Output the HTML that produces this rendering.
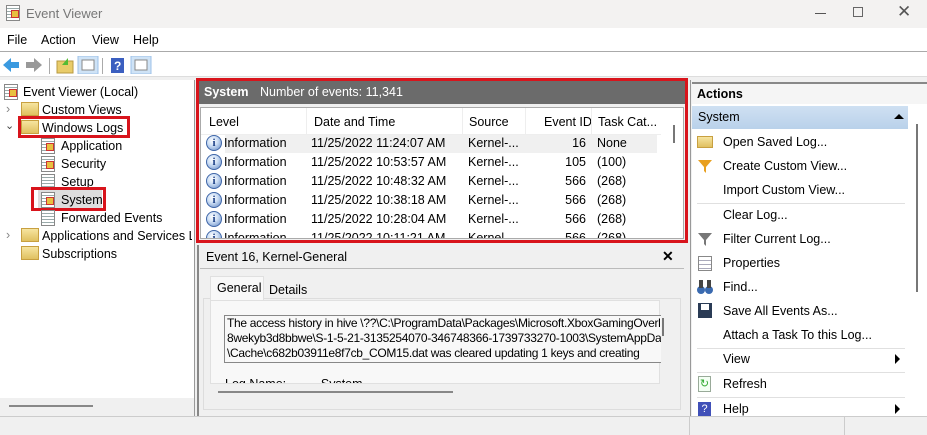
<!DOCTYPE html>
<html><head><meta charset="utf-8"><style>
*{margin:0;padding:0;box-sizing:border-box}
body{width:927px;height:435px;overflow:hidden;background:#f0f0f0;font-family:"Liberation Sans",sans-serif;font-size:12.5px;color:#000;position:relative}
.a{position:absolute;white-space:nowrap}
.info{position:absolute;width:16px;height:16px;border-radius:50%;background:radial-gradient(circle at 40% 35%,#fff,#cfe0f5 40%,#5f86c4);border:1px solid #3f66a8;color:#1b3f86;font:bold 11px "Liberation Serif",serif;text-align:center;line-height:14px}
.log{position:absolute;width:14px;height:16px;background:repeating-linear-gradient(#fff 0 2px,#9aa 2px 3px);border:1px solid #888}
.log.s:after{content:"";position:absolute;left:4px;top:4px;width:6px;height:6px;background:#e8c040;border:1px solid #c33}
.fold{position:absolute;width:18px;height:14px;background:linear-gradient(#f6e4a0,#e0c060);border:1px solid #c8a040}
.sep{position:absolute;height:1px;background:#e0e0e0}
</style></head><body>
<div class="a" style="left:0;top:0;width:927px;height:28px;background:#f3f2f1"></div>
<div class="log s" style="left:6px;top:5px"></div>
<div class="a" style="left:26px;top:6px;color:#777;font-size:13px">Event Viewer</div>
<div class="a" style="left:815px;top:13px;width:11px;height:1px;background:#555"></div>
<div class="a" style="left:853px;top:7px;width:10px;height:10px;border:1px solid #666"></div>
<div class="a" style="left:897px;top:2px;color:#555;font-size:17px">✕</div>
<div class="a" style="left:0;top:28px;width:927px;height:24px;background:#fff;border-bottom:1px solid #aaa"></div>
<div class="a" style="left:7px;top:33px">File</div>
<div class="a" style="left:41px;top:33px">Action</div>
<div class="a" style="left:92px;top:33px">View</div>
<div class="a" style="left:133px;top:33px">Help</div>
<div class="a" style="left:0;top:52px;width:927px;height:25px;background:#fff;border-bottom:1px solid #ddd"></div>
<svg class="a" style="left:2px;top:56px" width="150" height="18"><path d="M1 9 L9 2 V6 H17 V12 H9 V16Z" fill="#3a9ae0"/><path d="M40 9 L32 2 V6 H24 V12 H32 V16Z" fill="#999"/><rect x="47" y="2" width="1" height="16" fill="#aaa"/><rect x="55" y="5" width="16" height="12" fill="#e9cc6a" stroke="#b89a40"/><path d="M60 9 L66 2 L66 9" fill="#5b3"/><rect x="76" y="0" width="20" height="18" fill="#cfe3f6" stroke="#9cc2e8"/><rect x="80" y="4" width="12" height="10" fill="#fff" stroke="#888"/><rect x="100" y="2" width="1" height="16" fill="#aaa"/><rect x="109" y="2" width="13" height="15" fill="#3b5fc0"/><text x="112" y="14" fill="#fff" font-size="12" font-weight="bold" font-family="Liberation Sans">?</text><rect x="129" y="0" width="20" height="18" fill="#cfe3f6" stroke="#9cc2e8"/><rect x="133" y="4" width="12" height="10" fill="#fff" stroke="#888"/></svg>
<div class="a" style="left:0;top:80px;width:194px;height:318px;background:#fff"></div>
<div class="a" style="left:0;top:398px;width:194px;height:18px;background:#f0f0f0"></div>
<div class="a" style="left:9px;top:405px;width:84px;height:2px;background:#888"></div>
<div class="a" style="left:194px;top:80px;width:1px;height:336px;background:#999"></div>
<div class="log s" style="left:4px;top:84px"></div><div class="a" style="left:23px;top:85px">Event Viewer (Local)</div>
<div class="a" style="left:6px;top:102px;color:#888">›</div><div class="fold" style="left:21px;top:102px"></div><div class="a" style="left:42px;top:103px">Custom Views</div>
<div class="a" style="left:5px;top:119px;color:#444;font-size:11px">⌄</div><div class="fold" style="left:21px;top:120px"></div><div class="a" style="left:42px;top:121px">Windows Logs</div>
<div class="a" style="left:18px;top:116px;width:112px;height:22px;border:3px solid #d8141c"></div>
<div class="log s" style="left:41px;top:138px"></div><div class="a" style="left:61px;top:139px">Application</div>
<div class="log s" style="left:41px;top:156px"></div><div class="a" style="left:61px;top:157px">Security</div>
<div class="log" style="left:41px;top:174px"></div><div class="a" style="left:61px;top:175px">Setup</div>
<div class="a" style="left:38px;top:190px;width:64px;height:19px;background:#ddd"></div>
<div class="log s" style="left:41px;top:192px"></div><div class="a" style="left:61px;top:193px">System</div>
<div class="a" style="left:31px;top:187px;width:75px;height:24px;border:3px solid #d8141c"></div>
<div class="log" style="left:41px;top:210px"></div><div class="a" style="left:61px;top:211px">Forwarded Events</div>
<div class="a" style="left:6px;top:228px;color:#888">›</div><div class="fold" style="left:21px;top:228px"></div><div class="a" style="left:42px;top:229px;width:150px;overflow:hidden">Applications and Services Logs</div>
<div class="fold" style="left:21px;top:246px"></div><div class="a" style="left:42px;top:247px">Subscriptions</div>
<div class="a" style="left:196px;top:78px;width:492px;height:165px;border:3px solid #d8141c;background:#f0f0f0"></div>
<div class="a" style="left:199px;top:81px;width:486px;height:23px;background:#6b6b6b"></div>
<div class="a" style="left:204px;top:85px;color:#fff;font-weight:bold">System</div>
<div class="a" style="left:260px;top:85px;color:#fff">Number of events: 11,341</div>
<div class="a" style="left:200px;top:107px;width:484px;height:132px;background:#fff;border:1px solid #aaa;overflow:hidden">
<div style="position:absolute;left:0;top:0;width:460px;height:27px;border-bottom:1px solid #eee"></div>
<div class="a" style="left:8px;top:7px">Level</div><div class="a" style="left:105px;top:0;width:1px;height:27px;background:#eee"></div>
<div class="a" style="left:113px;top:7px">Date and Time</div><div class="a" style="left:261px;top:0;width:1px;height:27px;background:#eee"></div>
<div class="a" style="left:268px;top:7px">Source</div><div class="a" style="left:324px;top:0;width:1px;height:27px;background:#eee"></div>
<div class="a" style="left:343px;top:7px">Event ID</div><div class="a" style="left:390px;top:0;width:1px;height:27px;background:#eee"></div>
<div class="a" style="left:397px;top:7px">Task Cat...</div>
<div class="a" style="left:24px;top:27px;width:432px;height:18px;background:#f0f0f0"></div>
<div class="a" style="left:472px;top:17px;width:2px;height:18px;background:#777"></div>
<div class="a" style="left:-1px;top:26px;width:460px;height:104px;overflow:hidden">
<div class="info" style="left:6px;top:1px">i</div><div class="a" style="left:24px;top:2px">Information</div><div class="a" style="left:111px;top:2px">11/25/2022 11:24:07 AM</div><div class="a" style="left:268px;top:2px">Kernel-...</div><div class="a" style="left:370px;top:2px;width:16px;text-align:right">16</div><div class="a" style="left:397px;top:2px">None</div>
<div class="info" style="left:6px;top:20px">i</div><div class="a" style="left:24px;top:21px">Information</div><div class="a" style="left:111px;top:21px">11/25/2022 10:53:57 AM</div><div class="a" style="left:268px;top:21px">Kernel-...</div><div class="a" style="left:360px;top:21px;width:26px;text-align:right">105</div><div class="a" style="left:397px;top:21px">(100)</div>
<div class="info" style="left:6px;top:39px">i</div><div class="a" style="left:24px;top:40px">Information</div><div class="a" style="left:111px;top:40px">11/25/2022 10:48:32 AM</div><div class="a" style="left:268px;top:40px">Kernel-...</div><div class="a" style="left:360px;top:40px;width:26px;text-align:right">566</div><div class="a" style="left:397px;top:40px">(268)</div>
<div class="info" style="left:6px;top:58px">i</div><div class="a" style="left:24px;top:59px">Information</div><div class="a" style="left:111px;top:59px">11/25/2022 10:38:18 AM</div><div class="a" style="left:268px;top:59px">Kernel-...</div><div class="a" style="left:360px;top:59px;width:26px;text-align:right">566</div><div class="a" style="left:397px;top:59px">(268)</div>
<div class="info" style="left:6px;top:77px">i</div><div class="a" style="left:24px;top:78px">Information</div><div class="a" style="left:111px;top:78px">11/25/2022 10:28:04 AM</div><div class="a" style="left:268px;top:78px">Kernel-...</div><div class="a" style="left:360px;top:78px;width:26px;text-align:right">566</div><div class="a" style="left:397px;top:78px">(268)</div>
<div class="info" style="left:6px;top:96px">i</div><div class="a" style="left:24px;top:97px">Information</div><div class="a" style="left:111px;top:97px">11/25/2022 10:11:21 AM</div><div class="a" style="left:268px;top:97px">Kernel-...</div><div class="a" style="left:360px;top:97px;width:26px;text-align:right">566</div><div class="a" style="left:397px;top:97px">(268)</div>
</div>
</div>
<div class="a" style="left:197px;top:245px;width:2px;height:172px;background:#888"></div>
<div class="a" style="left:206px;top:250px">Event 16, Kernel-General</div>
<div class="a" style="left:662px;top:248px;font-weight:bold;font-size:14px">✕</div>
<div class="a" style="left:200px;top:268px;width:484px;height:1px;background:#bbb"></div>
<div class="a" style="left:203px;top:298px;width:478px;height:112px;border:1px solid #ddd"></div>
<div class="a" style="left:210px;top:276px;width:54px;height:24px;background:#f8f8f8;border:1px solid #e0e0e0;border-bottom:none"></div>
<div class="a" style="left:217px;top:281px">General</div><div class="a" style="left:269px;top:283px">Details</div>
<div class="a" style="left:210px;top:300px;width:450px;height:84px;background:#f8f8f8;border:1px solid #e0e0e0;overflow:hidden"><div class="a" style="left:14px;top:76px">Log Name:&nbsp;&nbsp;&nbsp;&nbsp;&nbsp;&nbsp;&nbsp;&nbsp;&nbsp;&nbsp;System</div></div>
<div class="a" style="left:224px;top:315px;width:437px;height:48px;border:1px solid #888;border-right:none;overflow:hidden;font-size:12px;line-height:15px;padding-left:2px;letter-spacing:-0.3px;background:#f8f8f8">The access history in hive \??\C:\ProgramData\Packages\Microsoft.XboxGamingOverlay_<br>8wekyb3d8bbwe\S-1-5-21-3135254070-346748366-1739733270-1003\SystemAppData<br>\Cache\c682b03911e8f7cb_COM15.dat was cleared updating 1 keys and creating</div>
<div class="a" style="left:662px;top:318px;width:2px;height:18px;background:#777"></div>
<div class="a" style="left:218px;top:391px;width:235px;height:2px;background:#888"></div>
<div class="a" style="left:690px;top:80px;width:1px;height:336px;background:#999"></div>
<div class="a" style="left:692px;top:82px;width:235px;height:334px;background:#fff;border-top:2px solid #888"></div>
<div class="a" style="left:692px;top:84px;width:235px;height:20px;background:#f5f5f5"></div>
<div class="a" style="left:697px;top:87px;font-weight:bold">Actions</div>
<div class="a" style="left:692px;top:106px;width:216px;height:23px;background:linear-gradient(#cfe0f2,#b9d1ea)"></div>
<div class="a" style="left:698px;top:110px">System</div>
<div class="a" style="left:894px;top:114px;border:5px solid transparent;border-bottom:5px solid #000;border-top:none;width:0;height:0"></div>
<div class="a" style="left:916px;top:124px;width:2px;height:168px;background:#777"></div>
<div class="fold" style="left:697px;top:136px;width:16px;height:12px"></div><div class="a" style="left:723px;top:135px">Open Saved Log...</div>
<svg class="a" style="left:697px;top:158px" width="16" height="16"><path d="M1 2 H15 L9 9 V15 L7 13 V9Z" fill="#e8a020"/></svg><div class="a" style="left:723px;top:159px">Create Custom View...</div>
<div class="a" style="left:723px;top:183px">Import Custom View...</div>
<div class="sep" style="left:697px;top:203px;width:208px"></div>
<div class="a" style="left:723px;top:208px">Clear Log...</div>
<svg class="a" style="left:697px;top:231px" width="16" height="16"><path d="M1 2 H15 L9 9 V15 L7 13 V9Z" fill="#777"/></svg><div class="a" style="left:723px;top:232px">Filter Current Log...</div>
<div class="a" style="left:698px;top:256px;width:14px;height:15px;border:1px solid #888;background:repeating-linear-gradient(#fff 0 3px,#aab 3px 4px)"></div><div class="a" style="left:723px;top:256px">Properties</div>
<svg class="a" style="left:697px;top:279px" width="16" height="16"><circle cx="4" cy="11" r="4" fill="#3a6ab0"/><circle cx="12" cy="11" r="4" fill="#3a6ab0"/><rect x="2" y="1" width="4" height="8" fill="#444"/><rect x="10" y="1" width="4" height="8" fill="#444"/></svg><div class="a" style="left:723px;top:280px">Find...</div>
<div class="a" style="left:698px;top:303px;width:14px;height:15px;background:#2a3b55"><div style="position:absolute;left:3px;top:1px;width:8px;height:6px;background:#fff"></div></div><div class="a" style="left:723px;top:304px">Save All Events As...</div>
<div class="a" style="left:723px;top:328px">Attach a Task To this Log...</div>
<div class="sep" style="left:697px;top:348px;width:208px"></div>
<div class="a" style="left:723px;top:352px">View</div><div class="a" style="left:895px;top:354px;border:5px solid transparent;border-left:5px solid #000;border-right:none;width:0;height:0"></div>
<div class="sep" style="left:697px;top:372px;width:208px"></div>
<div class="a" style="left:698px;top:376px;width:13px;height:16px;border:1px solid #9a9;background:#f4fff4;color:#3a3;font-size:11px;text-align:center;line-height:14px">↻</div><div class="a" style="left:723px;top:377px">Refresh</div>
<div class="sep" style="left:697px;top:397px;width:208px"></div>
<div class="a" style="left:698px;top:402px;width:13px;height:14px;background:#4050b8;color:#fff;font-size:11px;text-align:center;line-height:14px;overflow:hidden">?</div><div class="a" style="left:723px;top:402px;height:14px;overflow:hidden">Help</div><div class="a" style="left:895px;top:404px;border:5px solid transparent;border-left:5px solid #000;border-right:none;width:0;height:0"></div>
<div class="a" style="left:0;top:416px;width:927px;height:19px;background:#f0f0f0;border-top:1px solid #ccc"></div>
<div class="a" style="left:689px;top:417px;width:1px;height:18px;background:#ccc"></div>
<div class="a" style="left:844px;top:417px;width:1px;height:18px;background:#ccc"></div>
</body></html>
